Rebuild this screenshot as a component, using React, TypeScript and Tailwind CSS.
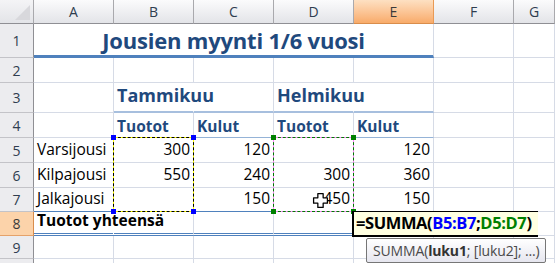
import React from "react";

const cols = ["A", "B", "C", "D", "E", "F", "G"];
const font = { fontFamily: '"Open Sans", "Liberation Sans", sans-serif' };

function ColHead({ label, active }: { label: string; active?: boolean }) {
  return (
    <div
      className={
        "flex items-center justify-center border-r border-b text-[14px] " +
        (active
          ? "bg-gradient-to-b from-[#fde0c2] to-[#f8ab6a] border-r-[#e99a55] border-b-[#d98d4c] text-[#3a3a3a]"
          : "bg-gradient-to-b from-[#fbfbfc] to-[#e3e4e8] border-r-[#a9a9ad] border-b-[#8f8f94] text-[#2f3d4f]")
      }
    >
      {label}
    </div>
  );
}

function RowHead({ n, active }: { n?: number; active?: boolean }) {
  return (
    <div
      className={
        "flex items-center justify-center border-r border-b text-[14px] " +
        (active
          ? "bg-[#fcd3aa] border-r-[#d98d4c] border-b-[#e5a26a] text-[#3a3a3a]"
          : "bg-[#ececef] border-r-[#8f8f94] border-b-[#c3c3c8] text-[#2f3d4f]")
      }
    >
      {n}
    </div>
  );
}

function Cell({ children, className = "" }: { children?: React.ReactNode; className?: string }) {
  return (
    <div className={"flex items-end pb-[1px] px-[3px] border-r border-b border-[#d6dbe6] whitespace-nowrap overflow-visible " + className}>
      {children}
    </div>
  );
}

const blueB = "border-b-[#4f81bd]";

export default function App() {
  return (
    <div className="relative w-[555px] h-[263px] overflow-hidden bg-white text-black" style={font}>
      <div className="grid grid-cols-[34px_80px_80px_80px_80px_80px_80px_1fr] grid-rows-[24px_34px_25px_30px_25px_25px_25px_24px_24px_23px_20px]">
        {/* header */}
        <div className="relative border-r border-b border-r-[#a9a9ad] border-b-[#8f8f94] bg-gradient-to-b from-[#f4f4f6] to-[#e3e4e8]">
          <div className="absolute right-[3px] bottom-[3px] w-0 h-0 border-l-[15px] border-l-transparent border-b-[15px] border-b-[#d8d8dc]" />
        </div>
        {cols.map((c) => (
          <ColHead key={c} label={c} active={c === "E"} />
        ))}

        {/* row 1 */}
        <RowHead n={1} />
        <div className={"col-span-5 flex items-center justify-center pt-[2px] border-r border-[#d6dbe6] border-b-[3px] " + blueB}>
          <span className="text-[22px] font-bold text-[#1f497d] tracking-[-0.2px]">Jousien myynti 1/6 vuosi</span>
        </div>
        <Cell />
        <Cell />

        {/* row 2 */}
        <RowHead n={2} />
        {cols.map((c) => (
          <Cell key={c} />
        ))}

        {/* row 3 */}
        <RowHead n={3} />
        <Cell />
        <Cell className="border-b-2 border-b-[#a7bfde] border-r-transparent pb-[2px]">
          <span className="text-[18px] font-bold text-[#1f497d]">Tammikuu</span>
        </Cell>
        <Cell className="border-b-2 border-b-[#a7bfde]" />
        <Cell className="border-b-2 border-b-[#a7bfde] border-r-transparent pb-[2px]">
          <span className="text-[18px] font-bold text-[#1f497d]">Helmikuu</span>
        </Cell>
        <Cell className="border-b-2 border-b-[#a7bfde]" />
        <Cell />
        <Cell />

        {/* row 4 */}
        <RowHead n={4} />
        <Cell />
        {["Tuotot", "Kulut", "Tuotot", "Kulut"].map((t, i) => (
          <Cell key={i} className="border-b-[#95b3d7] pb-0">
            <span className="text-[15.5px] font-bold text-[#1f497d] leading-[20px]">{t}</span>
          </Cell>
        ))}
        <Cell />
        <Cell />

        {/* rows 5-7 */}
        {[
          ["Varsijousi", "300", "120", "", "120"],
          ["Kilpajousi", "550", "240", "300", "360"],
          ["Jalkajousi", "", "150", "450", "150"],
        ].map((r, ri) => (
          <React.Fragment key={ri}>
            <RowHead n={5 + ri} />
            {r.map((v, ci) => (
              <Cell
                key={ci}
                className={(ci > 0 ? "justify-end " : "") + (ri === 2 ? blueB : "")}
              >
                <span className="text-[15.5px]">{v}</span>
              </Cell>
            ))}
            <Cell />
            <Cell />
          </React.Fragment>
        ))}

        {/* row 8 */}
        <RowHead n={8} active />
        <Cell className={"border-r-transparent border-b-[3px] border-double " + blueB}>
          <span className="text-[15.5px] font-bold">Tuotot yhteensä</span>
        </Cell>
        {[0, 1, 2, 3].map((i) => (
          <Cell key={i} className={"border-b-[3px] border-double " + blueB} />
        ))}
        <Cell />
        <Cell />

        {/* row 9-10 */}
        <RowHead n={9} />
        {cols.map((c) => (
          <Cell key={c} />
        ))}
        <RowHead />
        {cols.map((c) => (
          <Cell key={c} />
        ))}
      </div>

      {/* copy selection B5:B7 */}
      <div className="absolute left-[113px] top-[137px] w-[81px] h-[75px] border border-[#ffff00]" />
      <div className="absolute left-[113px] top-[137px] w-[81px] h-[75px] border border-dashed border-black" />
      {[
        [111, 135],
        [191, 135],
        [111, 209],
        [191, 209],
      ].map(([x, y], i) => (
        <div key={i} className="absolute w-[5px] h-[5px] bg-[#0000ff]" style={{ left: x, top: y }} />
      ))}

      {/* copy selection D5:D7 */}
      <div className="absolute left-[273px] top-[137px] w-[81px] h-[75px] border border-[#ff80ff]" />
      <div className="absolute left-[273px] top-[137px] w-[81px] h-[75px] border border-dashed border-[#007a00]" />
      {[
        [271, 135],
        [351, 135],
        [271, 209],
        [351, 209],
      ].map(([x, y], i) => (
        <div key={i} className="absolute w-[5px] h-[5px] bg-[#008000]" style={{ left: x, top: y }} />
      ))}

      {/* editing cell E8 */}
      <div className="absolute left-[352px] top-[211px] w-[186px] h-[26px] bg-[#ffffe1] border-l-2 border-t border-b-2 border-black flex items-center pl-[2px]">
        <span className="text-[16.5px] font-bold leading-none tracking-[-0.4px]">
          =SUMMA(<span className="text-[#0000ff]">B5:B7</span>;<span className="text-[#008000]">D5:D7</span>)
        </span>
      </div>

      {/* function tooltip */}
      <div className="absolute left-[366px] top-[238px] w-[180px] h-[25px] rounded-[2px] border border-[#767676] bg-gradient-to-b from-white to-[#e6e6ef] flex items-center pl-[6px] text-[14px] text-[#4a4a4a] whitespace-nowrap tracking-[-0.15px]">
        SUMMA(<b className="text-[#333]">luku1</b>; [luku2]; ...)
      </div>

      {/* cursor */}
      <svg className="absolute left-[312px] top-[192px]" width="17" height="17" viewBox="0 0 16 16">
        <path
          d="M5.5 1.5h5v4h4v5h-4v4h-5v-4h-4v-5h4z"
          fill="white"
          stroke="black"
          strokeWidth="1.2"
          strokeLinejoin="round"
        />
      </svg>
    </div>
  );
}
